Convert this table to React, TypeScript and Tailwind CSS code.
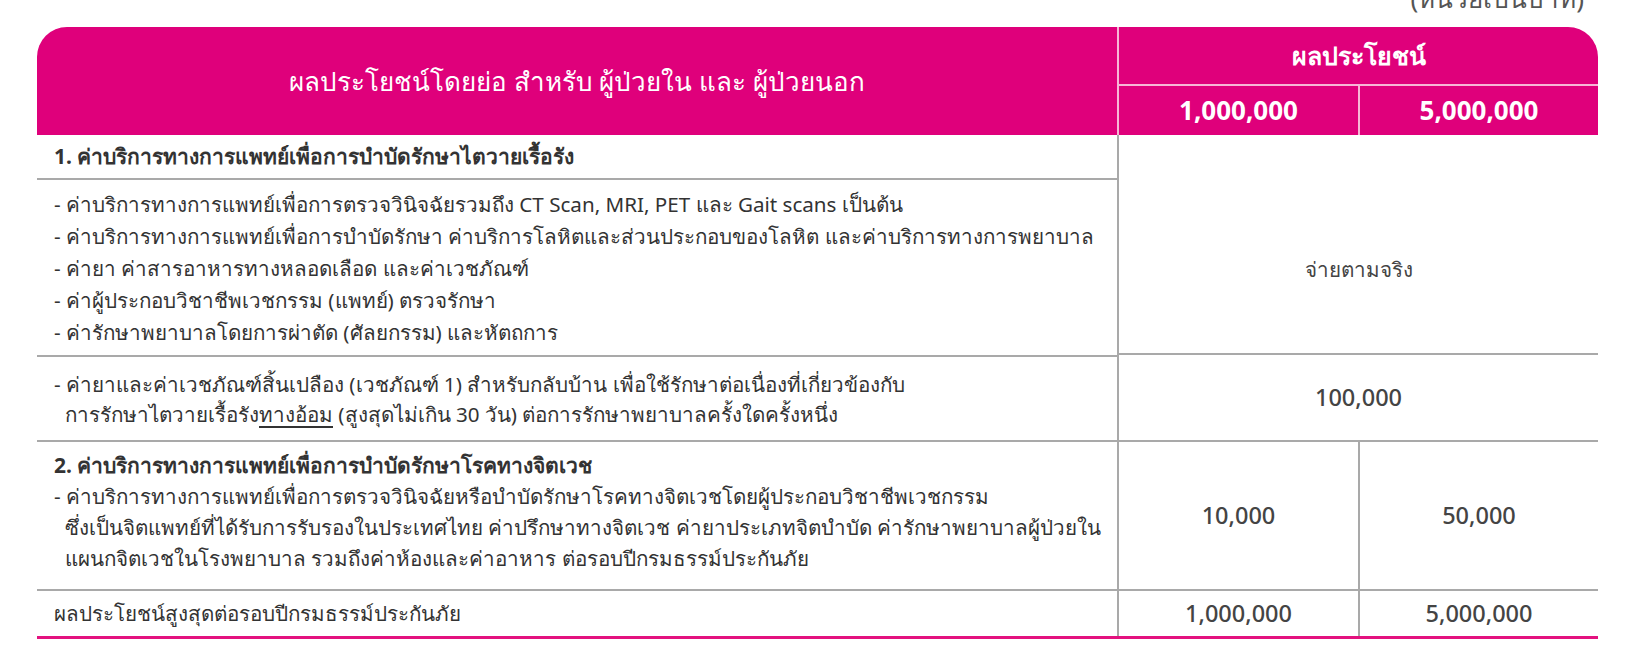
const PINK = "bg-[#df007b]";

type Line = { text: React.ReactNode; indent?: boolean };

function Lines({ lines }: { lines: Line[] }) {
  return (
    <>
      {lines.map((l, i) => (
        <div key={i} className={l.indent ? "pl-[11px]" : ""}>
          {l.text}
        </div>
      ))}
    </>
  );
}

const section1: Line[] = [
  { text: "- ค่าบริการทางการแพทย์เพื่อการตรวจวินิจฉัยรวมถึง CT Scan, MRI, PET และ Gait scans เป็นต้น" },
  { text: "- ค่าบริการทางการแพทย์เพื่อการบำบัดรักษา ค่าบริการโลหิตและส่วนประกอบของโลหิต และค่าบริการทางการพยาบาล" },
  { text: "- ค่ายา ค่าสารอาหารทางหลอดเลือด และค่าเวชภัณฑ์" },
  { text: "- ค่าผู้ประกอบวิชาชีพเวชกรรม (แพทย์) ตรวจรักษา" },
  { text: "- ค่ารักษาพยาบาลโดยการผ่าตัด (ศัลยกรรม) และหัตถการ" },
];

const homeCare: Line[] = [
  { text: "- ค่ายาและค่าเวชภัณฑ์สิ้นเปลือง (เวชภัณฑ์ 1) สำหรับกลับบ้าน เพื่อใช้รักษาต่อเนื่องที่เกี่ยวข้องกับ" },
  {
    indent: true,
    text: (
      <>
        การรักษาไตวายเรื้อรัง<span className="underline underline-offset-4">ทางอ้อม</span> (สูงสุดไม่เกิน 30 วัน) ต่อการรักษาพยาบาลครั้งใดครั้งหนึ่ง
      </>
    ),
  },
];

const section2: Line[] = [
  { text: "- ค่าบริการทางการแพทย์เพื่อการตรวจวินิจฉัยหรือบำบัดรักษาโรคทางจิตเวชโดยผู้ประกอบวิชาชีพเวชกรรม" },
  { text: "ซึ่งเป็นจิตแพทย์ที่ได้รับการรับรองในประเทศไทย ค่าปรึกษาทางจิตเวช ค่ายาประเภทจิตบำบัด ค่ารักษาพยาบาลผู้ป่วยใน", indent: true },
  { text: "แผนกจิตเวชในโรงพยาบาล รวมถึงค่าห้องและค่าอาหาร ต่อรอบปีกรมธรรม์ประกันภัย", indent: true },
];

export default function App() {
  return (
    <div className="h-[652px] w-[1640px] overflow-hidden bg-white font-['Noto_Sans',sans-serif] text-[#333]">
      <div className="ml-[37px] w-[1561px]">
        <div className="-mt-[19px] mb-[12px] pr-[14px] text-right text-[26px] leading-[34px] text-[#555]">
          (หน่วยเป็นบาท)
        </div>

        {/* header */}
        <div className={`grid grid-cols-[1080px_241px_240px] overflow-hidden rounded-t-[30px] text-white ${PINK}`}>
          <div className="row-span-2 flex items-center justify-center text-[26px] font-medium">
            ผลประโยชน์โดยย่อ สำหรับ ผู้ป่วยใน และ ผู้ป่วยนอก
          </div>
          <div className="col-span-2 flex h-[57px] items-center justify-center border-l-2 border-[#f7b6d6] pt-[1px] text-[25px] font-semibold">
            ผลประโยชน์
          </div>
          <div className="flex h-[51px] items-center justify-center border-l-2 border-t-2 border-[#f7b6d6] text-[26px] font-bold">
            1,000,000
          </div>
          <div className="flex h-[51px] items-center justify-center border-l-2 border-t-2 border-[#f7b6d6] text-[26px] font-bold">
            5,000,000
          </div>
        </div>

        {/* body */}
        <div className="grid grid-cols-[1080px_241px_240px] border-b-[3px] border-[#e3127f] text-[20.6px]">
          {/* section 1 */}
          <div className="flex h-[45px] items-center border-b-2 border-[#a9a9a9] pl-[17px] pt-[1px] text-[21px] font-semibold">
            <span className="font-bold">1.</span>&nbsp;ค่าบริการทางการแพทย์เพื่อการบำบัดรักษาไตวายเรื้อรัง
          </div>
          <div className="col-span-2 row-span-2 flex items-center justify-center border-b-2 border-l-2 border-[#a9a9a9] pt-[50px] font-medium text-[#444]">
            จ่ายตามจริง
          </div>
          <div className="flex h-[175px] flex-col justify-center pl-[17px] leading-[32px]">
            <Lines lines={section1} />
          </div>

          {/* home care */}
          <div className="flex h-[85px] flex-col justify-center border-t-2 border-[#a9a9a9] pl-[17px] leading-[30px]">
            <Lines lines={homeCare} />
          </div>
          <div className="col-span-2 flex items-center justify-center border-l-2 border-[#a9a9a9] text-[23.5px] font-medium text-[#444]">
            100,000
          </div>

          {/* section 2 */}
          <div className="flex h-[149px] flex-col border-t-2 border-[#a9a9a9] pl-[17px] pt-[8px] leading-[31px]">
            <div className="text-[21px] font-semibold">
              <span className="font-bold">2.</span>&nbsp;ค่าบริการทางการแพทย์เพื่อการบำบัดรักษาโรคทางจิตเวช
            </div>
            <Lines lines={section2} />
          </div>
          <div className="flex items-center justify-center border-l-2 border-t-2 border-[#a9a9a9] text-[23.5px] font-medium text-[#444]">
            10,000
          </div>
          <div className="flex items-center justify-center border-l-2 border-t-2 border-[#a9a9a9] text-[23.5px] font-medium text-[#444]">
            50,000
          </div>

          {/* total */}
          <div className="flex h-[47px] items-center border-t-2 border-[#a9a9a9] pl-[17px] font-medium">
            ผลประโยชน์สูงสุดต่อรอบปีกรมธรรม์ประกันภัย
          </div>
          <div className="flex items-center justify-center border-l-2 border-t-2 border-[#a9a9a9] text-[23.5px] font-medium text-[#444]">
            1,000,000
          </div>
          <div className="flex items-center justify-center border-l-2 border-t-2 border-[#a9a9a9] text-[23.5px] font-medium text-[#444]">
            5,000,000
          </div>
        </div>
      </div>
    </div>
  );
}
